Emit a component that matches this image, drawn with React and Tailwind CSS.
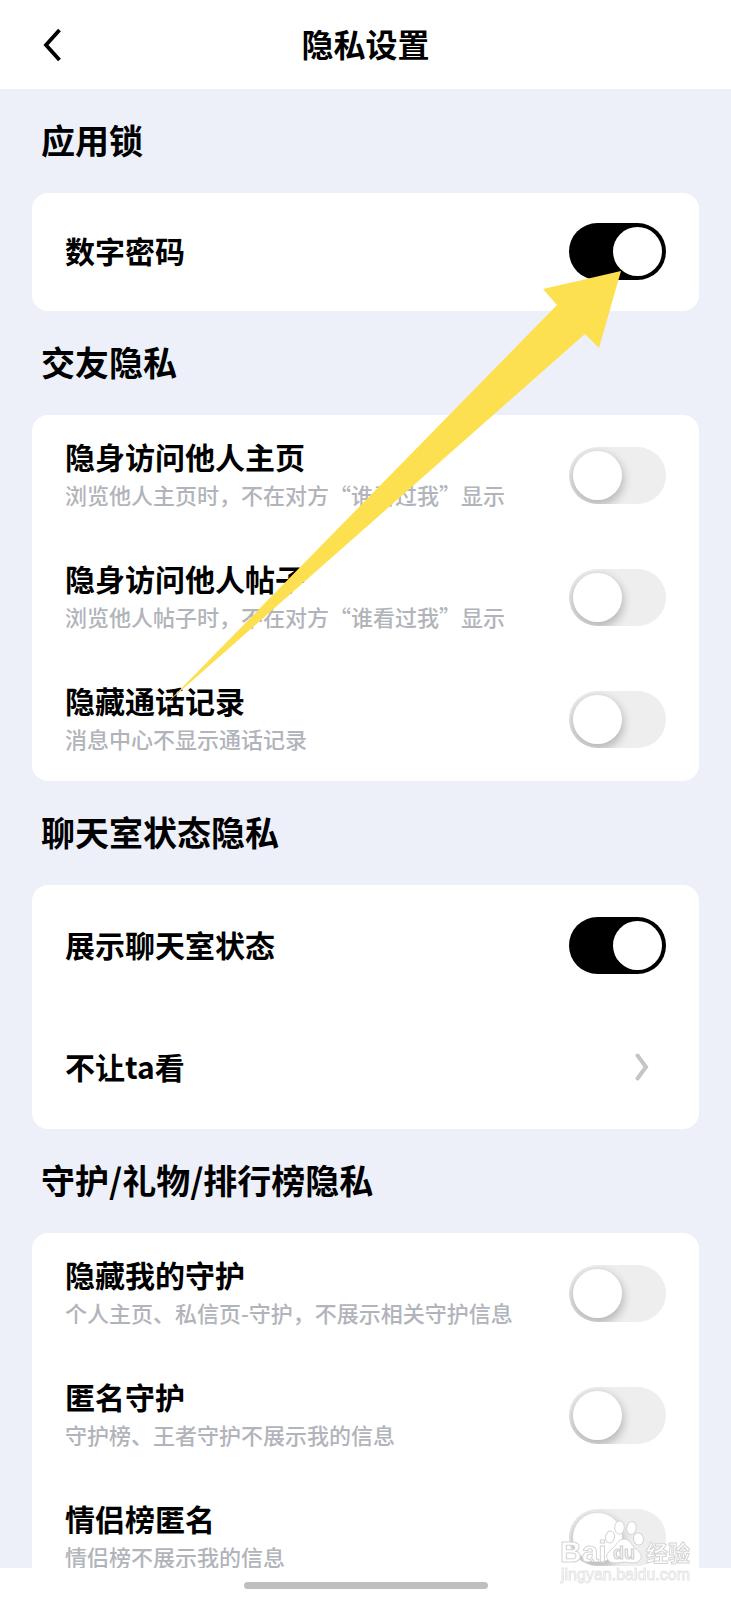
import { useState } from "react";

const sections = [
  {
    title: "应用锁",
    compact: true,
    items: [{ id: "passcode", label: "数字密码", on: true }],
  },
  {
    title: "交友隐私",
    items: [
      { id: "visit-home", label: "隐身访问他人主页", hint: "浏览他人主页时，不在对方“谁看过我”显示" },
      { id: "visit-post", label: "隐身访问他人帖子", hint: "浏览他人帖子时，不在对方“谁看过我”显示" },
      { id: "call-log", label: "隐藏通话记录", hint: "消息中心不显示通话记录" },
    ],
  },
  {
    title: "聊天室状态隐私",
    items: [
      { id: "room-status", label: "展示聊天室状态", on: true },
      { id: "block-list", label: "不让ta看", href: "#block-list" },
    ],
  },
  {
    title: "守护/礼物/排行榜隐私",
    items: [
      { id: "hide-guard", label: "隐藏我的守护", hint: "个人主页、私信页-守护，不展示相关守护信息" },
      { id: "anon-guard", label: "匿名守护", hint: "守护榜、王者守护不展示我的信息" },
      { id: "anon-couple", label: "情侣榜匿名", hint: "情侣榜不展示我的信息" },
    ],
  },
];

function Switch({ id, checked, onChange }) {
  return (
    <input
      id={id}
      type="checkbox"
      role="switch"
      checked={checked}
      onChange={onChange}
      className="relative h-[57px] w-[97px] shrink-0 cursor-pointer appearance-none overflow-hidden rounded-full bg-[#eeeeee] before:absolute before:top-1 before:left-1 before:size-[49px] before:rounded-full before:bg-white before:shadow-[0_4px_8px_2px_rgba(0,0,0,0.22)] checked:bg-black checked:before:left-11 checked:before:shadow-none"
    />
  );
}

function Row({ item, compact }) {
  const [checked, setChecked] = useState(Boolean(item.on));
  const height = compact ? "h-[118px]" : "h-[122px]";

  if (item.href) {
    return (
      <a href={item.href} className={`flex items-center justify-between pr-[50px] pb-0.5 pl-[33px] ${height}`}>
        <span className="pb-0.5 text-[30px] leading-10 font-bold">{item.label}</span>
        <svg viewBox="0 0 14 28" className="h-7 w-3.5" fill="none" stroke="#c4c5c9" strokeWidth="4">
          <path d="M2.5 2.5 L11 14 L2.5 25.5" strokeLinecap="round" />
        </svg>
      </a>
    );
  }

  return (
    <div className={`flex items-center justify-between px-[33px] pb-0.5 ${height}`}>
      <label htmlFor={item.id} className="flex flex-col pb-0.5">
        <span className="text-[30px] leading-10 font-bold">{item.label}</span>
        {item.hint && (
          <span className="text-[22px] leading-9 font-medium text-[#b1b4ba]">{item.hint}</span>
        )}
      </label>
      <Switch id={item.id} checked={checked} onChange={(e) => setChecked(e.target.checked)} />
    </div>
  );
}

function Pointer() {
  return (
    <svg
      viewBox="0 0 454 434"
      className="pointer-events-none absolute top-[270px] right-[110px] h-[434px] w-[454px]"
      fill="#fde050"
    >
      <path d="M454 1 L376 19 L390 35 L0 433 L418 64 L432 78 Z" />
    </svg>
  );
}

function Watermark() {
  return (
    <svg
      viewBox="0 0 136 70"
      className="pointer-events-none absolute right-9 bottom-3 h-[70px] w-[136px]"
      fill="#ffffff"
      stroke="#d4d4d4"
      strokeWidth="1"
      fontFamily="'Liberation Sans', 'Noto Sans CJK SC', sans-serif"
    >
      <text x="1" y="44" fontSize="30" fontWeight="700">Bai</text>
      <ellipse cx="51" cy="19" rx="4.5" ry="6" transform="rotate(12 51 19)" />
      <ellipse cx="60.5" cy="9.5" rx="4.8" ry="6.6" />
      <ellipse cx="72.5" cy="10" rx="4.8" ry="6.6" transform="rotate(10 72.5 10)" />
      <ellipse cx="79.5" cy="21" rx="5" ry="6" transform="rotate(-12 79.5 21)" />
      <path d="M65 21 C59 21 58 27 53 31 C48 35 46 38 49 42 C52 46 58 45 65 44 C72 45 78 46 81 42 C84 38 81 34 77 31 C72 27 71 21 65 21 Z" />
      <text x="54" y="41" fontSize="18" fontWeight="700" fill="#f0f0f0" stroke="#cfcfcf">du</text>
      <text x="87" y="43" fontSize="22" fontWeight="700">经验</text>
      <text x="2" y="62" fontSize="16" stroke="#e6e6e6">jingyan.baidu.com</text>
    </svg>
  );
}

export default function App() {
  return (
    <div className="relative flex h-screen flex-col overflow-hidden bg-white font-['Noto_Sans_CJK_SC',sans-serif] text-black">
      <header className="grid h-[89px] shrink-0 grid-cols-[1fr_auto_1fr] items-center px-10">
        <button type="button" aria-label="返回" className="justify-self-start">
          <svg viewBox="0 0 24 34" className="h-[34px] w-6" fill="none" stroke="currentColor" strokeWidth="3.8">
            <path d="M19.5 2 L6 17 L19.5 32" />
          </svg>
        </button>
        <h1 className="pb-1 text-[32px] leading-[42px] font-bold">隐私设置</h1>
      </header>

      <main className="min-h-0 flex-1 overflow-y-auto bg-[#edf0f9] px-8 [scrollbar-width:none]">
        {sections.map((section) => (
          <section key={section.title}>
            <h2 className="flex h-[104px] items-center px-[9px] pb-0.5 text-[34px] leading-[42px] font-bold">
              {section.title}
            </h2>
            <div className="rounded-2xl bg-white">
              {section.items.map((item) => (
                <Row key={item.id} item={item} compact={section.compact} />
              ))}
            </div>
          </section>
        ))}
      </main>

      <footer className="flex h-8 shrink-0 items-center justify-center pt-0.5">
        <div className="h-[7px] w-[244px] rounded-full bg-[#bfbfbf]" />
      </footer>

      <Pointer />
      <Watermark />
    </div>
  );
}
